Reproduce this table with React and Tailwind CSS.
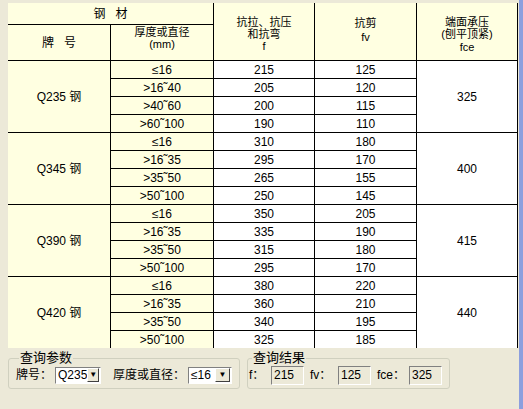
import React from 'react';

const groups = [
  { name: 'Q235 钢', fce: 325, rows: [['≤16', 215, 125], ['>16˜40', 205, 120], ['>40˜60', 200, 115], ['>60˜100', 190, 110]] },
  { name: 'Q345 钢', fce: 400, rows: [['≤16', 310, 180], ['>16˜35', 295, 170], ['>35˜50', 265, 155], ['>50˜100', 250, 145]] },
  { name: 'Q390 钢', fce: 415, rows: [['≤16', 350, 205], ['>16˜35', 335, 190], ['>35˜50', 315, 180], ['>50˜100', 295, 170]] },
  { name: 'Q420 钢', fce: 440, rows: [['≤16', 380, 220], ['>16˜35', 360, 210], ['>35˜50', 340, 195], ['>50˜100', 325, 185]] },
];

const font = { fontFamily: '"Liberation Sans", "Noto Sans CJK SC", sans-serif' };

const ComboBox = ({ value, width }) => (
  <div className={`flex items-center h-[17px] bg-white border border-t-[#808080] border-l-[#808080] border-r-white border-b-white ${width}`}>
    <span className="flex-1 pl-[2px] text-[12px] leading-none">{value}</span>
    <span className="w-[15px] h-[14px] mr-px flex items-center justify-center bg-[#ece9d8] border border-t-white border-l-white border-r-[#404040] border-b-[#404040] text-[8px] leading-none">
      ▼
    </span>
  </div>
);

const ResultBox = ({ value }) => (
  <div className="w-[33px] h-[19px] flex items-center pl-[2px] bg-[#ece9d8] border border-t-[#808080] border-l-[#808080] border-r-white border-b-white text-[12px] leading-none">
    {value}
  </div>
);

export default function App() {
  return (
    <div className="w-[523px] h-[409px] bg-[#ece9d8] flex text-black overflow-hidden" style={font}>
      <div className="flex-1 flex flex-col">
        <div className="h-[349px] pt-[3px] pl-2 overflow-hidden">
          <div className="w-[510px] grid grid-cols-[102px_102px_100px_101px_100px] grid-rows-[21px_35px_repeat(16,17px)] gap-px bg-black pr-px text-[12px]">
            <div className="col-span-2 bg-[#ffffe1] flex items-center justify-center">钢&nbsp;&nbsp;&nbsp;材</div>
            <div className="row-span-2 bg-[#ffffe1] flex flex-col items-center pt-[13px] text-[11px] leading-[12px]">
              <span>抗拉、抗压</span>
              <span>和抗弯</span>
              <span>f</span>
            </div>
            <div className="row-span-2 bg-[#ffffe1] flex flex-col items-center pt-[14px] text-[11px] leading-[12px]">
              <span>抗剪</span>
              <span className="mt-[2px]">fv</span>
            </div>
            <div className="row-span-2 bg-[#ffffe1] flex flex-col items-center pt-[13px] text-[11px] leading-[12px]">
              <span>端面承压</span>
              <span>(刨平顶紧)</span>
              <span className="mt-px">fce</span>
            </div>
            <div className="bg-[#ffffe1] flex items-center justify-center">牌&nbsp;&nbsp;&nbsp;号</div>
            <div className="bg-[#ffffe1] flex flex-col items-center text-[11px] leading-[12px] pt-px">
              <span>厚度或直径</span>
              <span>(mm)</span>
            </div>
            {groups.map((g) => (
              <React.Fragment key={g.name}>
                <div className="row-span-4 bg-[#ffffe1] flex items-center justify-center" style={{ gridColumn: 1 }}>
                  {g.name}
                </div>
                {g.rows.map((r, i) => (
                  <React.Fragment key={r[0]}>
                    <div className="bg-[#ffffe1] flex items-center justify-center" style={{ gridColumn: 2 }}>{r[0]}</div>
                    <div className="bg-white flex items-center justify-center">{r[1]}</div>
                    <div className="bg-white flex items-center justify-center">{r[2]}</div>
                    {i === 0 && (
                      <div className="row-span-4 bg-white flex items-center justify-center">{g.fce}</div>
                    )}
                  </React.Fragment>
                ))}
              </React.Fragment>
            ))}
          </div>
        </div>
        <div className="flex items-start gap-[7px] pl-2 pt-[2px] text-[12px]">
          <fieldset className="w-[230px] h-[38px] border border-[#d0d0bf] rounded-[3px] px-[7px] flex items-center">
            <legend className="px-px ml-[3px] leading-[14px] text-[13px]">查询参数</legend>
            <div className="flex items-center -mt-[3px]">
              <span className="w-[39px]">牌号：</span>
              <ComboBox value="Q235" width="w-[46px]" />
              <span className="ml-[12px] w-[75px]">厚度或直径：</span>
              <ComboBox value="≤16" width="w-[44px]" />
            </div>
          </fieldset>
          <fieldset className="w-[203px] h-[38px] border border-[#d0d0bf] rounded-[3px] px-[1px] flex items-center">
            <legend className="px-px ml-[3px] leading-[14px] text-[13px]">查询结果</legend>
            <div className="flex items-center -mt-[3px]">
              <span className="w-[22px]">f：</span>
              <ResultBox value="215" />
              <span className="ml-[6px] w-[28px]">fv：</span>
              <ResultBox value="125" />
              <span className="ml-[6px] w-[32px]">fce：</span>
              <ResultBox value="325" />
            </div>
          </fieldset>
        </div>
      </div>
      <div className="w-[4px] bg-[#8c9fde]" />
    </div>
  );
}
